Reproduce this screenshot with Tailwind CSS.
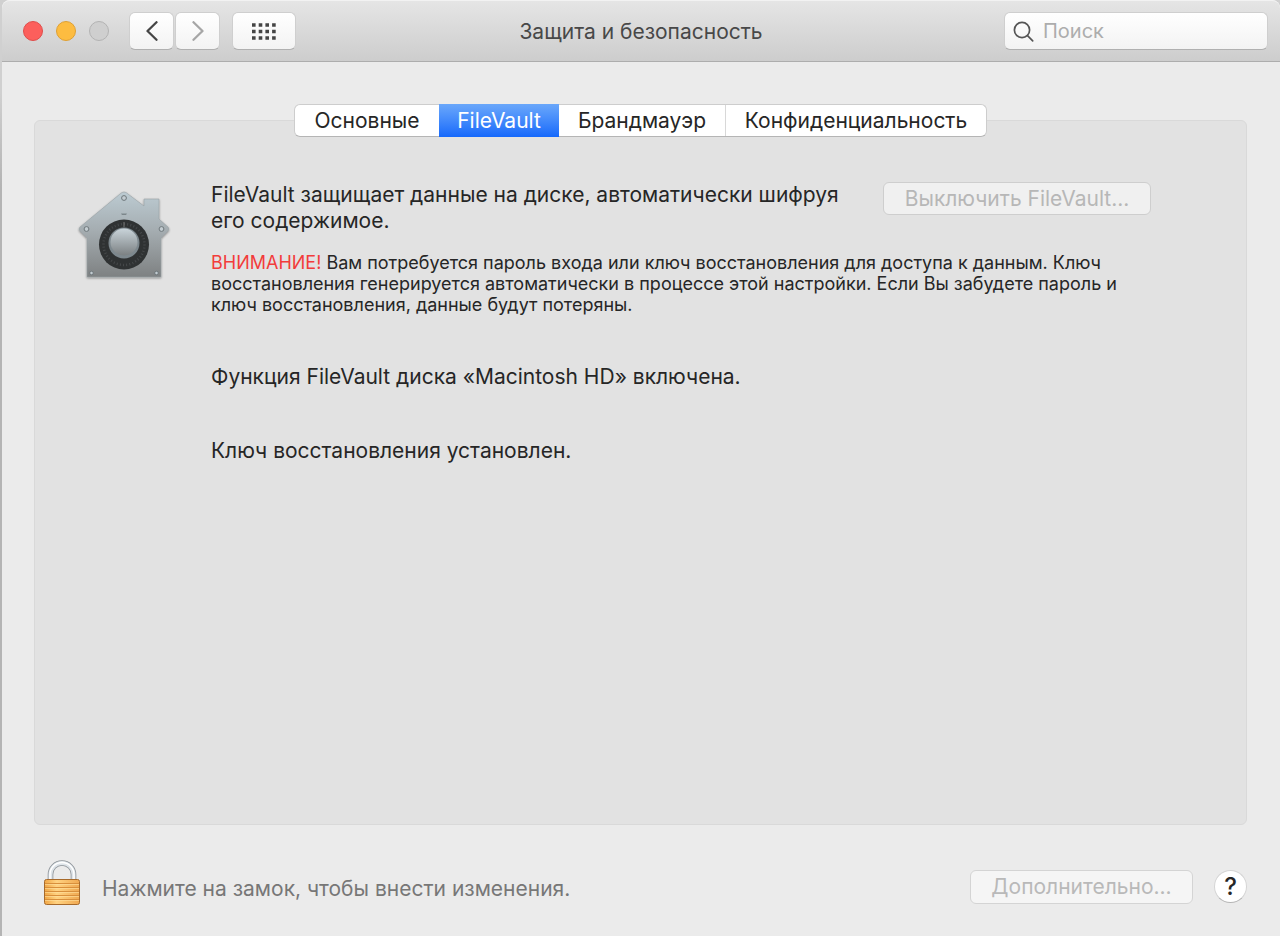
<!DOCTYPE html>
<html lang="ru">
<head>
<meta charset="utf-8">
<meta name="viewport" content="width=device-width, initial-scale=1">
<title>Защита и безопасность</title>
<script src="https://cdn.jsdelivr.net/npm/@tailwindcss/browser@4"></script>
</head>
<body class="min-h-screen bg-linear-to-b from-[#d0d0d0] from-10% to-[#b4b4b4] to-20% pl-[2px] font-[Inter,sans-serif] text-[#262626]">
<div class="flex min-h-screen flex-col rounded-t-lg bg-[#ebebeb]">

  <header class="grid h-[62px] grid-cols-[1fr_auto_1fr] items-center rounded-t-lg border-t border-b border-t-[#f2f2f2] border-b-[#adadad] bg-linear-to-b from-[#e5e5e5] to-[#cdcdcd] px-3">
    <div class="ml-[9px] flex items-center">
      <div class="flex gap-[13px]">
        <button aria-label="Закрыть" class="size-5 rounded-full border border-[#df4d4b] bg-[#fc5f5c]"></button>
        <button aria-label="Свернуть" class="size-5 rounded-full border border-[#dfa033] bg-[#fdbc40]"></button>
        <button aria-label="Развернуть" disabled class="size-5 rounded-full border border-[#b3b3b3] bg-[#cfcfcf]"></button>
      </div>
      <div class="ml-5 flex gap-px">
        <button aria-label="Назад" class="flex h-[38px] w-[45px] items-center justify-center rounded-md border border-[#cfcfcf] border-b-[#b0b0b0] bg-linear-to-b from-white to-[#f3f3f3]">
          <svg class="h-5 w-3" viewBox="0 0 12 20" fill="none" stroke="#454545" stroke-width="2.3" stroke-linecap="round" stroke-linejoin="round"><path d="M10.5 1.2 1.5 10l9 8.8"/></svg>
        </button>
        <button aria-label="Вперёд" disabled class="flex h-[38px] w-[45px] items-center justify-center rounded-md border border-[#cfcfcf] border-b-[#b0b0b0] bg-linear-to-b from-white to-[#f3f3f3]">
          <svg class="h-5 w-3" viewBox="0 0 12 20" fill="none" stroke="#a6a6a6" stroke-width="2.3" stroke-linecap="round" stroke-linejoin="round"><path d="M1.5 1.2l9 8.8-9 8.8"/></svg>
        </button>
      </div>
      <button aria-label="Показать все" class="ml-3 flex h-[38px] w-16 items-center justify-center rounded-md border border-[#cfcfcf] border-b-[#b0b0b0] bg-linear-to-b from-white to-[#f3f3f3]">
        <svg class="h-[17px] w-6" viewBox="0 0 24 17" fill="none" stroke="#454545" stroke-width="3.6" stroke-dasharray="3.6 3.1"><path d="M0 2h24M0 8.5h24M0 15h24"/></svg>
      </button>
    </div>
    <h1 class="pt-0.5 text-[21px] leading-6 text-[#484848]">Защита и безопасность</h1>
    <label class="flex h-[38px] w-[264px] items-center gap-2 justify-self-end rounded-md border border-[#cfcfcf] border-b-[#b0b0b0] bg-linear-to-b from-white to-[#f3f3f3] pl-2">
      <svg class="mt-0.5 size-[22px] shrink-0" viewBox="0 0 22 22" fill="none" stroke="#555" stroke-width="1.7" stroke-linecap="round"><circle cx="9" cy="9" r="7.6"/><path d="m14.5 14.7 5.2 5.2"/></svg>
      <input type="search" aria-label="Поиск" placeholder="Поиск" class="w-full min-w-0 bg-transparent text-[20px] leading-6 outline-none placeholder:text-[#adadad]">
    </label>
  </header>

  <main class="flex grow flex-col pt-[42px] pr-[33px] pl-8">
    <nav class="z-10 flex h-[33px] self-center rounded-md border border-[#cdcdcd] border-b-[#b5b5b5] bg-white text-[21px] leading-6">
      <button class="w-36 whitespace-nowrap">Основные</button>
      <button class="-my-px w-[120px] bg-linear-to-b from-[#6aa7fa] to-[#1468fb] whitespace-nowrap text-white">FileVault</button>
      <button class="w-[166px] whitespace-nowrap">Брандмауэр</button>
      <button class="w-[261px] border-l border-[#d8d8d8] whitespace-nowrap">Конфиденциальность</button>
    </nav>

    <section class="-mt-[17px] flex grow gap-10 rounded-md border border-[#d9d9d9] bg-[#e2e2e2] pt-[61px] pr-[95px] pl-[42px]">
      <svg class="mt-[9px] h-[92px] w-[94px] shrink-0" viewBox="0 0 94 92" role="img" aria-label="FileVault">
        <defs>
          <linearGradient id="house" x1="0" y1="0" x2="0" y2="1"><stop offset="0" stop-color="#bccbd2"/><stop offset=".45" stop-color="#a5adb1"/><stop offset="1" stop-color="#7e8182"/></linearGradient>
          <linearGradient id="knob" x1="0" y1="0" x2="0" y2="1"><stop offset="0" stop-color="#c9d4da"/><stop offset="1" stop-color="#7b8082"/></linearGradient>
          <filter id="shade" x="-10%" y="-10%" width="120%" height="120%"><feDropShadow dx="0" dy="1" stdDeviation="1" flood-opacity=".4"/></filter>
        </defs>
        <path filter="url(#shade)" fill="url(#house)" stroke="#98a1a5" stroke-width=".6" d="M47 1q2 0 4 2l16 12V8h15v20l9 8q2 2 0 4l-7 7v39H10V47l-7-7q-2-2 0-4L43 3q2-2 4-2Z"/>
        <path d="M44 22.500h6l-1 1.500h-4Z" fill="#7d878b"/>
        <circle cx="47" cy="53.500" r="25" fill="#2f3233"/>
        <circle cx="47" cy="53.500" r="20.500" fill="none" stroke="#46494b" stroke-width="2.500" stroke-dasharray="1 2.200"/>
        <path d="M47 31v5" stroke="#777" stroke-width="1"/>
        <circle cx="47" cy="52" r="15.500" fill="#7d888e"/>
        <circle cx="47" cy="51" r="13.500" fill="url(#knob)"/>
        <g fill="#c3ccd1" stroke="#6e777b" stroke-width="1"><circle cx="47" cy="7" r="2.400"/><circle cx="9.500" cy="38" r="2.400"/><circle cx="84.500" cy="38" r="2.400"/><circle cx="14.500" cy="82" r="1.800"/><circle cx="79.500" cy="82" r="1.800"/></g>
      </svg>
      <div class="grow">
        <div class="flex items-start justify-between">
          <p class="text-[21px] leading-[26px] whitespace-nowrap">FileVault защищает данные на диске, автоматически шифруя<br>его содержимое.</p>
          <button disabled class="h-[33px] w-[268px] shrink-0 rounded-md border border-[#cecece] bg-[#f0f0f0] text-[21px] leading-6 whitespace-nowrap text-[#b7b7b7]">Выключить FileVault...</button>
        </div>
        <p class="mt-[18px] text-[18px] leading-[21px] whitespace-nowrap"><strong class="font-normal text-[#f23c3b]">ВНИМАНИЕ!</strong> Вам потребуется пароль входа или ключ восстановления для доступа к данным. Ключ<br>восстановления генерируется автоматически в процессе этой настройки. Если Вы забудете пароль и<br>ключ восстановления, данные будут потеряны.</p>
        <p class="mt-[49px] text-[21px] leading-[26px]">Функция FileVault диска «Macintosh HD» включена.</p>
        <p class="mt-12 text-[21px] leading-[26px]">Ключ восстановления установлен.</p>
      </div>
    </section>
  </main>

  <footer class="flex h-[111px] items-center pt-3 pr-[33px] pl-[41px]">
    <button aria-label="Замок" class="mb-2 h-[46px] w-[38px]">
      <svg class="block h-[46px] w-[38px]" viewBox="0 0 38 46">
        <defs><linearGradient id="brass" x1="0" y1="0" x2="1" y2="0"><stop offset="0" stop-color="#f0a544"/><stop offset=".35" stop-color="#ffd281"/><stop offset="1" stop-color="#f0a850"/></linearGradient></defs>
        <path d="M7.500 20v-5.500a11.500 11.500 0 0 1 23 0V20" fill="none" stroke="#8d9398" stroke-width="5.600"/>
        <path d="M7.500 20v-5.500a11.500 11.500 0 0 1 23 0V20" fill="none" stroke="#dfe5ea" stroke-width="4"/>
        <path d="M7 20v-5.500a12 12 0 0 1 24 0V20" fill="none" stroke="#fff" stroke-width="1.400"/>
        <rect x="1.500" y="19.500" width="35" height="25" rx="2" fill="url(#brass)" stroke="#a76a2b"/>
        <path d="M2 23.500h34M2 27.500h34M2 31.500h34M2 35.500h34M2 39.500h34" stroke="#d88f3c" stroke-width="1"/>
        <path d="M2 24.500h34M2 28.500h34M2 32.500h34M2 36.500h34M2 40.500h34" stroke="#ffe2a0" stroke-width="1" opacity=".6"/>
      </svg>
    </button>
    <p class="ml-[21px] pt-1 text-[21px] leading-6 text-[#777]">Нажмите на замок, чтобы внести изменения.</p>
    <button disabled class="ml-auto h-[34px] w-[223px] rounded-md border border-[#d4d4d4] bg-[#f5f5f5] text-[21px] leading-6 whitespace-nowrap text-[#b9b9b9]">Дополнительно...</button>
    <button aria-label="Справка" class="ml-[21px] size-[33px] rounded-full border border-[#d4d4d4] border-b-[#b5b5b5] bg-white text-[24px] leading-6 font-medium">?</button>
  </footer>
</div>
</body>
</html>
